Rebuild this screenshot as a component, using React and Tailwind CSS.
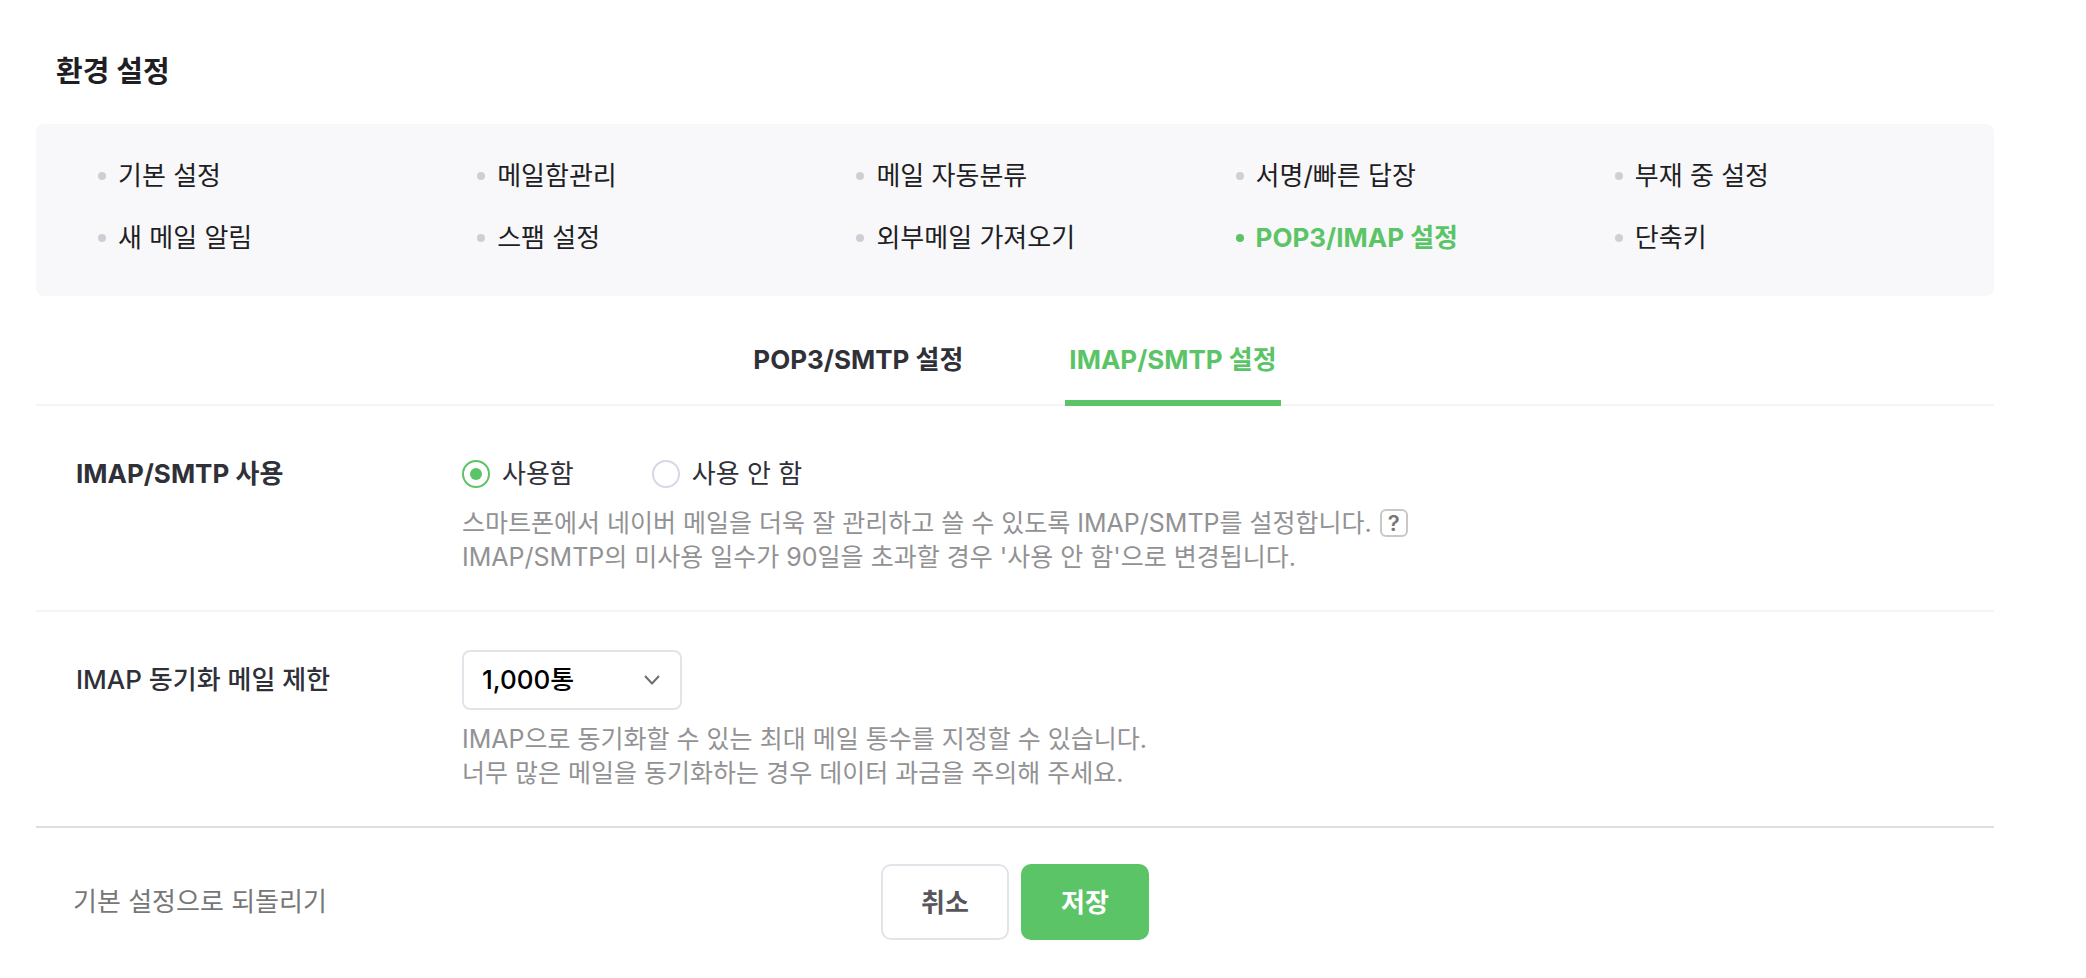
import { useState } from "react";

const MENU = [
  "기본 설정",
  "메일함관리",
  "메일 자동분류",
  "서명/빠른 답장",
  "부재 중 설정",
  "새 메일 알림",
  "스팸 설정",
  "외부메일 가져오기",
  "POP3/IMAP 설정",
  "단축키",
];

const CURRENT_MENU = "POP3/IMAP 설정";

function SettingsMenu() {
  return (
    <nav className="rounded-lg bg-[#f8f8fa] pt-[30px] pr-[30px] pb-[36px] pl-8">
      <ul className="grid grid-cols-5 gap-y-[18px]">
        {MENU.map((item) => {
          const current = item === CURRENT_MENU;
          return (
            <li key={item} className="pl-[30px]">
              <a
                href="#"
                aria-current={current ? "page" : undefined}
                className={
                  current
                    ? "flex items-center gap-3 text-[26px] leading-[44px] font-bold whitespace-nowrap text-[#5bc467]"
                    : "flex items-center gap-3 text-[26px] leading-[44px] whitespace-nowrap text-[#1e1e23]"
                }
              >
                <span
                  className={
                    current
                      ? "size-2 shrink-0 rounded-full bg-[#5bc467]"
                      : "size-2 shrink-0 rounded-full bg-[#cdcfd6]"
                  }
                />
                {item}
              </a>
            </li>
          );
        })}
      </ul>
    </nav>
  );
}

function Tabs() {
  return (
    <div className="flex justify-center gap-[98px] border-b-2 border-[#f4f4f6] pt-8">
      <a
        href="#"
        className="-mb-[2px] border-b-[6px] border-transparent px-1 pt-3 pb-5 text-[26px] leading-10 font-bold text-[#303038]"
      >
        POP3/SMTP 설정
      </a>
      <a
        href="#"
        aria-current="page"
        className="-mb-[2px] border-b-[6px] border-[#5bc467] px-1 pt-3 pb-5 text-[26px] leading-10 font-bold text-[#5bc467]"
      >
        IMAP/SMTP 설정
      </a>
    </div>
  );
}

function Radio({ label, checked, onChange }) {
  return (
    <label className="flex items-center gap-3 text-[26px] leading-9 text-[#303038]">
      <input
        type="radio"
        name="imap-use"
        checked={checked}
        onChange={onChange}
        className="size-7 appearance-none rounded-full border-2 border-[#d6d8e8] bg-white bg-clip-content p-[6px] checked:border-[#5bc467] checked:bg-[#5bc467]"
      />
      {label}
    </label>
  );
}

export default function App() {
  const [enabled, setEnabled] = useState(true);

  return (
    <main className="bg-white pr-[92px] pb-[38px] pl-9 font-[Inter,'Noto_Sans_CJK_KR',sans-serif]">
      <h1 className="px-5 pt-[50px] pb-[30px] text-[29px] leading-[44px] font-bold text-[#1e1e23]">
        환경 설정
      </h1>
      <SettingsMenu />
      <Tabs />

      <section className="flex border-b-2 border-[#f4f4f6] pt-[50px] pb-9 pl-10">
        <h2 className="w-[386px] shrink-0 text-[26px] leading-9 font-bold text-[#303038]">
          IMAP/SMTP 사용
        </h2>
        <div>
          <div className="flex gap-[78px]">
            <Radio label="사용함" checked={enabled} onChange={() => setEnabled(true)} />
            <Radio label="사용 안 함" checked={!enabled} onChange={() => setEnabled(false)} />
          </div>
          <div className="mt-[14px] text-[25px] leading-[34px] text-[#929294]">
            <p className="flex items-center gap-2">
              스마트폰에서 네이버 메일을 더욱 잘 관리하고 쓸 수 있도록 IMAP/SMTP를 설정합니다.
              <button
                type="button"
                aria-label="도움말"
                className="flex size-7 shrink-0 items-center justify-center rounded-md border-2 border-[#c8c8c8] text-[22px] leading-6 font-semibold text-[#777777]"
              >
                ?
              </button>
            </p>
            <p>IMAP/SMTP의 미사용 일수가 90일을 초과할 경우 '사용 안 함'으로 변경됩니다.</p>
          </div>
        </div>
      </section>

      <section className="flex border-b-2 border-[#dedee0] pt-[38px] pb-9 pl-10">
        <label
          htmlFor="sync-limit"
          className="w-[386px] shrink-0 text-[26px] leading-[60px] font-medium text-[#303038]"
        >
          IMAP 동기화 메일 제한
        </label>
        <div>
          <div className="relative w-[220px]">
            <select
              id="sync-limit"
              defaultValue="1000"
              className="h-[60px] w-full appearance-none rounded-lg border-2 border-[#e3e4e9] bg-white pr-12 pl-[18px] text-[26px] leading-9 font-medium text-black"
            >
              <option value="1000">1,000통</option>
              <option value="5000">5,000통</option>
              <option value="10000">10,000통</option>
            </select>
            <svg
              viewBox="0 0 16 10"
              className="pointer-events-none absolute top-[25px] right-[22px] h-[10px] w-4 fill-none stroke-[#6e6e6e] stroke-2"
            >
              <path d="M1 1l7 7.5L15 1" />
            </svg>
          </div>
          <div className="mt-3 text-[25px] leading-[34px] text-[#929294]">
            <p>IMAP으로 동기화할 수 있는 최대 메일 통수를 지정할 수 있습니다.</p>
            <p>너무 많은 메일을 동기화하는 경우 데이터 과금을 주의해 주세요.</p>
          </div>
        </div>
      </section>

      <footer className="grid grid-cols-[1fr_auto_1fr] items-center pt-9">
        <button type="button" className="justify-self-start pl-[37px] text-[26px] leading-9 text-[#777777]">
          기본 설정으로 되돌리기
        </button>
        <div className="flex gap-3">
          <button
            type="button"
            className="h-[76px] w-32 rounded-[10px] border-2 border-[#e3e4e9] bg-white text-[26px] font-semibold text-[#56565c]"
          >
            취소
          </button>
          <button
            type="button"
            className="h-[76px] w-32 rounded-[10px] bg-[#5bc467] text-[26px] font-bold text-white"
          >
            저장
          </button>
        </div>
      </footer>
    </main>
  );
}
